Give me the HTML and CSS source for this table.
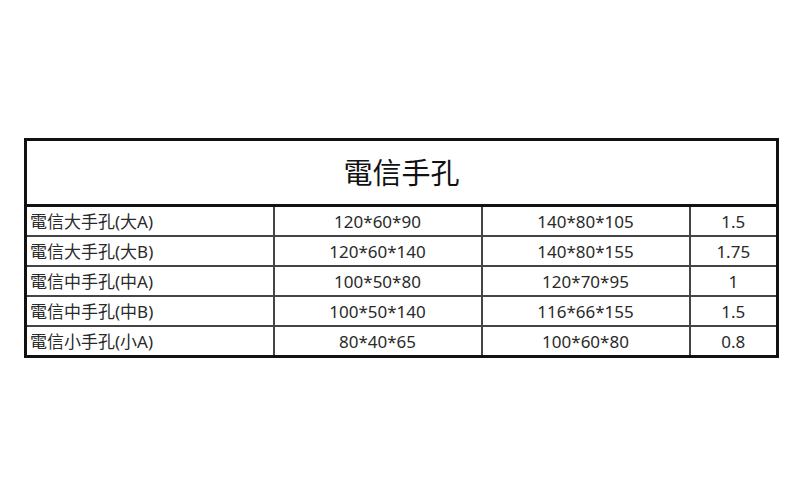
FILE: index.html
```html
<!DOCTYPE html>
<html lang="zh-Hant">
<head>
<meta charset="utf-8">
<link rel="stylesheet" href="styles.css">
</head>
<body>
<div class="page">
  <table class="spec">
    <colgroup>
      <col class="c1"><col class="c2"><col class="c3"><col class="c4">
    </colgroup>
    <thead>
      <tr><th colspan="4" class="title">電信手孔</th></tr>
    </thead>
    <tbody>
      <tr><td class="name">電信大手孔(大A)</td><td>120*60*90</td><td>140*80*105</td><td>1.5</td></tr>
      <tr><td class="name">電信大手孔(大B)</td><td>120*60*140</td><td>140*80*155</td><td>1.75</td></tr>
      <tr><td class="name">電信中手孔(中A)</td><td>100*50*80</td><td>120*70*95</td><td>1</td></tr>
      <tr><td class="name">電信中手孔(中B)</td><td>100*50*140</td><td>116*66*155</td><td>1.5</td></tr>
      <tr><td class="name">電信小手孔(小A)</td><td>80*40*65</td><td>100*60*80</td><td>0.8</td></tr>
    </tbody>
  </table>
</div>
</body>
</html>
```

FILE: styles.css
```css
html, body {
  margin: 0;
  padding: 0;
  background: #ffffff;
}
.page {
  padding: 138px 0 0 24px;
}
.spec {
  border-collapse: collapse;
  width: 752px;
  table-layout: fixed;
  border: 3px solid #111;
  font-family: "Noto Sans", "Noto Sans CJK TC", sans-serif;
  color: #2a2a2a;
}
.c1 { width: 248px; }
.c2 { width: 208px; }
.c3 { width: 208px; }
.c4 { width: 88px; }
.title {
  height: 63px;
  padding: 0;
  font-size: 29px;
  font-weight: 400;
  color: #111;
  text-align: center;
  border-bottom: 3px solid #111;
  line-height: 1;
}
.spec td {
  height: 28px;
  padding: 0;
  font-size: 17px;
  line-height: 1;
  text-align: center;
  border: 2px solid #444;
}
.spec td.name {
  text-align: left;
  padding-left: 3px;
}
```
